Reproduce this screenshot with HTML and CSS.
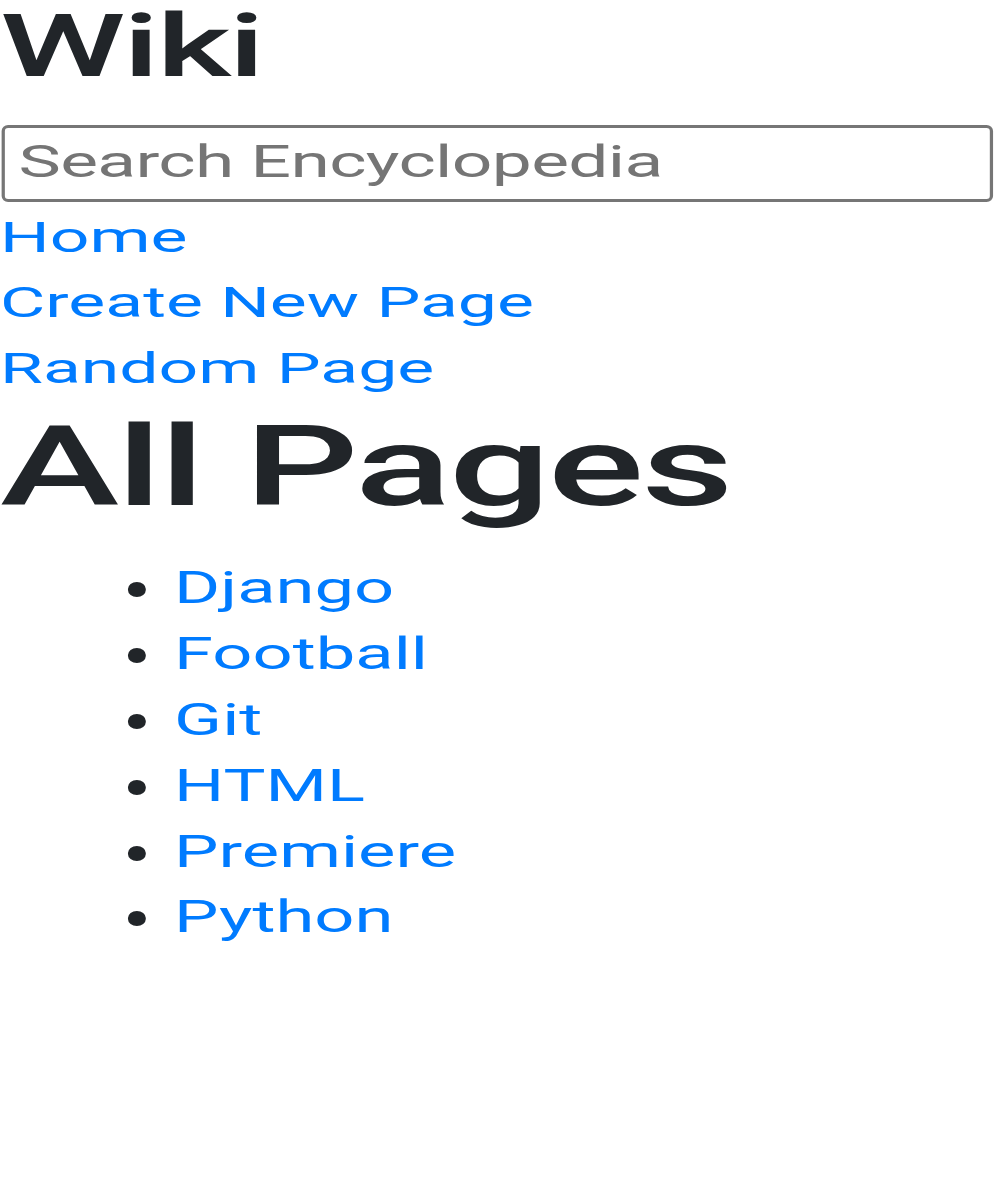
FILE: index.html
```html
<!DOCTYPE html>
<html lang="en">
<head>
<meta charset="utf-8">
<title>Encyclopedia</title>
<link rel="stylesheet" href="styles.css">
</head>
<body>
<div class="page">
  <div class="sidebar">
    <h2 class="brand">Wiki</h2>
    <form class="search-form">
      <input class="search" type="text" name="q" placeholder="Search Encyclopedia">
    </form>
    <nav class="nav">
      <div class="nav-item"><a href="#">Home</a></div>
      <div class="nav-item"><a href="#">Create New Page</a></div>
      <div class="nav-item"><a href="#">Random Page</a></div>
    </nav>
  </div>
  <div class="main">
    <h1 class="title">All Pages</h1>
    <ul class="entries">
      <li><a href="#">Django</a></li>
      <li><a href="#">Football</a></li>
      <li><a href="#">Git</a></li>
      <li><a href="#">HTML</a></li>
      <li><a href="#">Premiere</a></li>
      <li><a href="#">Python</a></li>
    </ul>
  </div>
</div>
</body>
</html>
```
FILE: styles.css
```css
html, body {
  margin: 0;
  padding: 0;
  background: #ffffff;
  overflow: hidden;
}

body {
  font-family: Roboto, "Liberation Sans", sans-serif;
  color: #212529;
}

.page {
  width: 617px;
  transform: scaleX(1.62);
  transform-origin: 0 0;
}

.brand {
  margin: 0 0 33px 0;
  font-size: 88px;
  font-weight: 500;
  letter-spacing: -1.6px;
  line-height: 92px;
}

.search-form {
  margin: 0;
}

.search {
  display: block;
  box-sizing: border-box;
  width: 612px;
  height: 77px;
  margin: 0 0 0 0.9px;
  padding: 0 0 3px 8.5px;
  border-style: solid;
  border-color: #767676;
  border-width: 3px 2.5px;
  border-radius: 4px / 6px;
  font-family: Roboto, "Liberation Sans", sans-serif;
  font-size: 44px;
  letter-spacing: -0.4px;
  color: #212529;
  background: #fff;
  outline: none;
}

.search::placeholder {
  color: #757575;
  opacity: 1;
}

.nav {
  margin-top: 2.6px;
}

.nav-item {
  font-size: 43px;
  line-height: 65.5px;
}

a {
  color: #007bff;
  text-decoration: none;
}

.title {
  margin: 0 0 23.4px 0;
  font-size: 111px;
  font-weight: 500;
  letter-spacing: -1.8px;
  line-height: 132px;
}

.entries {
  margin: 0;
  padding-left: 78.5px;
  font-size: 43.5px;
  line-height: 65.8px;
  list-style: none;
}

.entries li::before {
  content: "";
  display: inline-block;
  width: 11.7px;
  height: 15px;
  margin-right: 17.3px;
  border-radius: 50%;
  background: #212529;
  vertical-align: 6px;
}
```
